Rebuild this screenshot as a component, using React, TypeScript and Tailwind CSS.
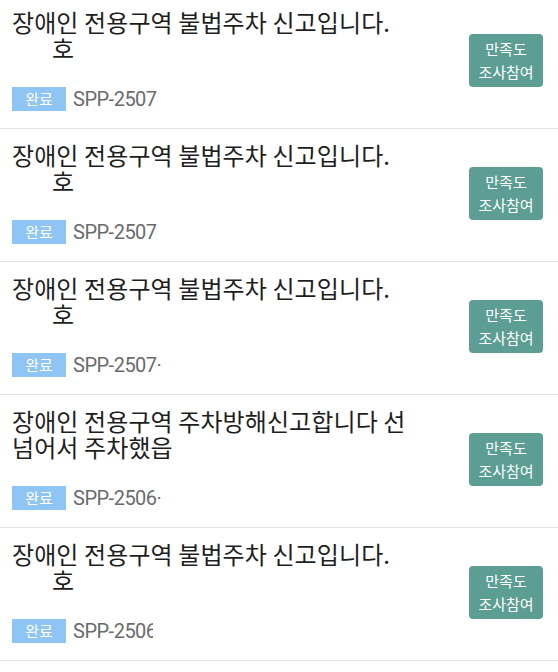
const FONT = "font-['Noto_Sans_CJK_KR','Noto_Sans',sans-serif]";

interface Report {
  id: number;
  first: string;
  second: string;
  indent: boolean;
  code: string;
  clip?: boolean;
}

const reports: Report[] = [
  { id: 1, first: "장애인 전용구역 불법주차 신고입니다.", second: "호", indent: true, code: "SPP-2507" },
  { id: 2, first: "장애인 전용구역 불법주차 신고입니다.", second: "호", indent: true, code: "SPP-2507" },
  { id: 3, first: "장애인 전용구역 불법주차 신고입니다.", second: "호", indent: true, code: "SPP-2507·" },
  { id: 4, first: "장애인 전용구역 주차방해신고합니다 선", second: "넘어서 주차했읍", indent: false, code: "SPP-2506·" },
  { id: 5, first: "장애인 전용구역 불법주차 신고입니다.", second: "호", indent: true, code: "SPP-2506", clip: true },
];

function ReportRow({ report }: { report: Report }) {
  return (
    <li className="flex items-center justify-between border-b border-[#e4e4e4] pl-[12px] pr-[15px] pt-[13px] pb-[17px]">
      <div className="flex flex-col">
        <div className="text-[24px] leading-[26px] text-[#1e1e1e] tracking-[0.1px]">
          <div>{report.first}</div>
          <div className={report.indent ? "pl-[40px]" : ""}>{report.second}</div>
        </div>
        <div className="mt-[26px] flex items-center gap-[7px]">
          <span className="flex h-[24px] w-[54px] items-center justify-center bg-[#8ec5f4] text-[15px] text-white">
            완료
          </span>
          <span
            className={`whitespace-nowrap font-['Roboto','Noto_Sans',sans-serif] text-[20px] leading-[24px] tracking-[-0.5px] text-[#6b6b6b] ${
              report.clip ? "w-[80px] overflow-hidden" : ""
            }`}
          >
            {report.code}
          </span>
        </div>
      </div>
      <button className="flex h-[53px] w-[74px] flex-col items-center justify-center rounded-[4px] bg-[#5c9e94] text-[15px] leading-[23px] text-white">
        <span>만족도</span>
        <span>조사참여</span>
      </button>
    </li>
  );
}

export default function App() {
  return (
    <div className={`h-[672px] w-[558px] overflow-hidden bg-white ${FONT}`}>
      <ul className="-mt-[4px]">
        {reports.map((report) => (
          <ReportRow key={report.id} report={report} />
        ))}
      </ul>
    </div>
  );
}
